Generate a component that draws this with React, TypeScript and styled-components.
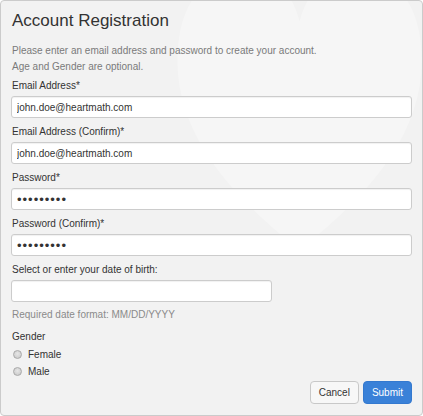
import React from "react";
import styled, { createGlobalStyle } from "styled-components";

const Global = createGlobalStyle`
  html, body { margin: 0; padding: 0; background: #ffffff; }
  body { font-family: "Liberation Sans", Arial, Helvetica, sans-serif; }
  * { box-sizing: border-box; }
`;

const Panel = styled.div`
  position: relative;
  width: 423px;
  height: 416px;
  border: 1px solid #cbcbcb;
  border-radius: 4px;
  background: #f2f2f2;
  overflow: hidden;
`;

const Watermark = styled.svg`
  position: absolute;
  left: 0;
  top: 0;
  width: 100%;
  height: 100%;
  z-index: 0;
`;

const Content = styled.div`
  position: relative;
  z-index: 1;
  padding: 0 10px;
  display: flex;
  flex-direction: column;
`;

const Title = styled.h1`
  margin: 10px 0 0 1px;
  font-size: 17px;
  line-height: 20px;
  font-weight: normal;
  color: #333333;
`;

const Intro = styled.p`
  margin: 12px 0 3px 1px;
  font-size: 10px;
  line-height: 16px;
  color: #7a7a7a;
`;

const Field = styled.div`
  display: flex;
  flex-direction: column;
  margin-bottom: 6px;
`;

const Label = styled.label`
  font-size: 10px;
  line-height: 16px;
  color: #333333;
  margin-bottom: 2px;
  padding-left: 1px;
`;

const Input = styled.input<{ $width?: number; $secret?: boolean }>`
  width: ${(p) => (p.$width ? `${p.$width}px` : "100%")};
  height: 22px;
  padding: 0 5px;
  border: 1px solid #cccccc;
  border-radius: 3px;
  background: #ffffff;
  box-shadow: inset 0 1px 1px rgba(0, 0, 0, 0.06);
  font-family: "Liberation Sans", Arial, sans-serif;
  font-size: ${(p) => (p.$secret ? "13px" : "10px")};
  letter-spacing: ${(p) => (p.$secret ? "1px" : "normal")};
  color: #333333;
  outline: none;
`;

const Help = styled.div`
  margin-top: 5px;
  padding-left: 1px;
  font-size: 10px;
  line-height: 16px;
  color: #8a8a8a;
`;

const GroupLabel = styled.div`
  padding-left: 1px;
  margin-bottom: 1px;
  font-size: 10px;
  line-height: 16px;
  color: #333333;
`;

const RadioRow = styled.label`
  display: flex;
  align-items: center;
  height: 17px;
  font-size: 10px;
  color: #333333;
  gap: 6px;
  padding-left: 2px;
`;

const Radio = styled.input`
  appearance: none;
  -webkit-appearance: none;
  margin: 0;
  width: 9px;
  height: 9px;
  border-radius: 50%;
  border: 1px solid #a9a9a9;
  background: radial-gradient(circle at 50% 40%, #e6e6e6 0%, #c6c6c6 100%);
`;

const Actions = styled.div`
  display: flex;
  justify-content: flex-end;
  gap: 4px;
  margin-top: 1px;
`;

const Button = styled.button<{ $primary?: boolean }>`
  height: 23px;
  padding: 0 8px;
  border-radius: 4px;
  font-family: "Liberation Sans", Arial, sans-serif;
  font-size: 10px;
  border: 1px solid ${(p) => (p.$primary ? "#3479cf" : "#c8c8c8")};
  background: ${(p) => (p.$primary ? "#3a81d8" : "#f7f7f7")};
  color: ${(p) => (p.$primary ? "#ffffff" : "#333333")};
`;

export default function App() {
  return (
    <>
      <Global />
      <Panel>
        <Watermark viewBox="0 0 423 416" aria-hidden="true">
          <path
            d="M300 250 C 210 180, 165 110, 180 30 C 195 -45, 280 -55, 300 20 C 320 -55, 405 -45, 420 30 C 435 110, 390 180, 300 250 Z"
            fill="#ffffff"
            opacity="0.3"
          />
        </Watermark>
        <Content>
          <Title>Account Registration</Title>
          <Intro>
            Please enter an email address and password to create your account.
            <br />
            Age and Gender are optional.
          </Intro>
          <Field>
            <Label>Email Address*</Label>
            <Input type="text" defaultValue="john.doe@heartmath.com" />
          </Field>
          <Field>
            <Label>Email Address (Confirm)*</Label>
            <Input type="text" defaultValue="john.doe@heartmath.com" />
          </Field>
          <Field>
            <Label>Password*</Label>
            <Input type="password" $secret defaultValue="123456789" />
          </Field>
          <Field>
            <Label>Password (Confirm)*</Label>
            <Input type="password" $secret defaultValue="123456789" />
          </Field>
          <Field>
            <Label>Select or enter your date of birth:</Label>
            <Input type="text" $width={261} defaultValue="" />
            <Help>Required date format: MM/DD/YYYY</Help>
          </Field>
          <GroupLabel>Gender</GroupLabel>
          <RadioRow>
            <Radio type="radio" name="gender" />
            Female
          </RadioRow>
          <RadioRow>
            <Radio type="radio" name="gender" />
            Male
          </RadioRow>
          <Actions>
            <Button type="button">Cancel</Button>
            <Button type="button" $primary>
              Submit
            </Button>
          </Actions>
        </Content>
      </Panel>
    </>
  );
}
